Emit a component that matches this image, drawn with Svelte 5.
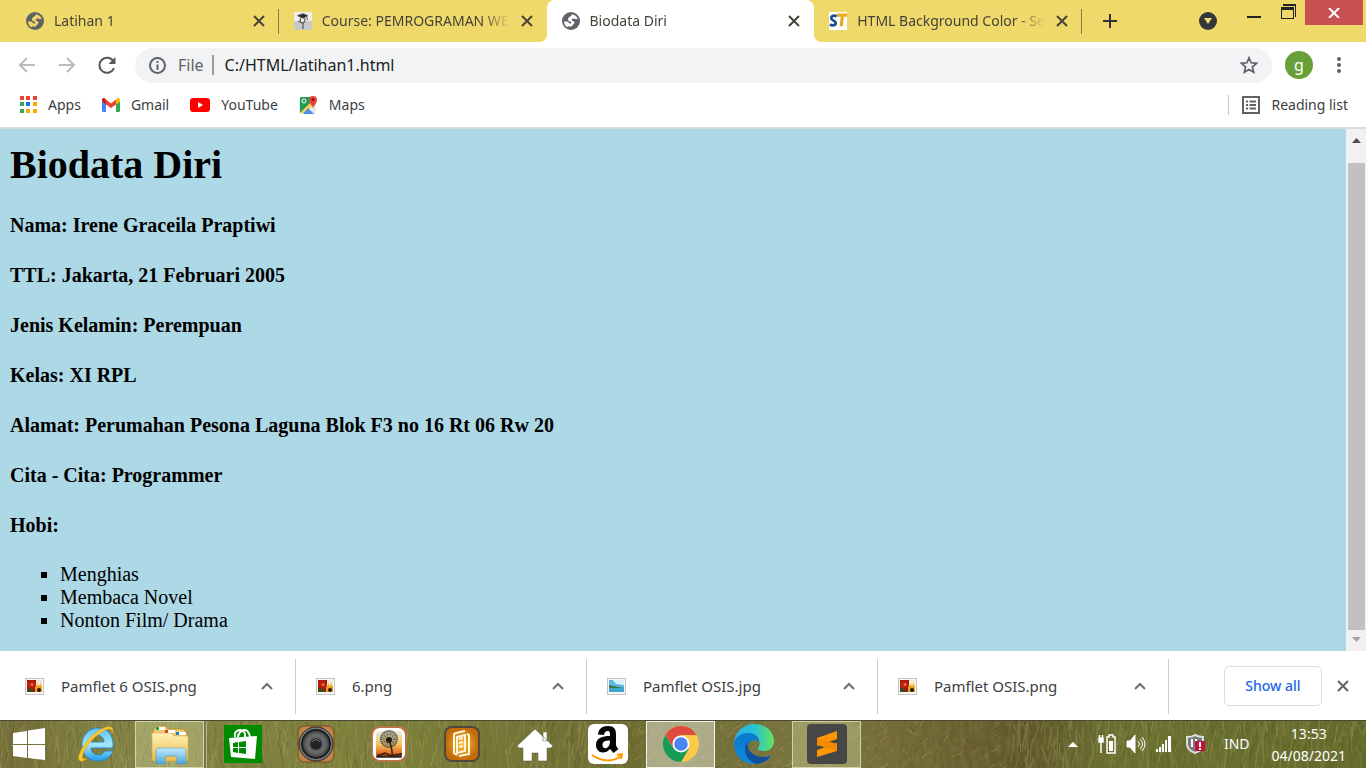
<script>
  const tabs = [
    { title: 'Latihan 1', icon: 'globe' },
    { title: 'Course: PEMROGRAMAN WE', icon: 'course' },
    { title: 'Biodata Diri', icon: 'globe', active: true },
    { title: 'HTML Background Color - Se', icon: 'st' }
  ];
  const biodata = [
    'Nama: Irene Graceila Praptiwi',
    'TTL: Jakarta, 21 Februari 2005',
    'Jenis Kelamin: Perempuan',
    'Kelas: XI RPL',
    'Alamat: Perumahan Pesona Laguna Blok F3 no 16 Rt 06 Rw 20',
    'Cita - Cita: Programmer',
    'Hobi:'
  ];
  const hobbies = ['Menghias', 'Membaca Novel', 'Nonton Film/ Drama'];
  const downloads = [
    { name: 'Pamflet 6 OSIS.png', kind: 'flower' },
    { name: '6.png', kind: 'flower' },
    { name: 'Pamflet OSIS.jpg', kind: 'sea' },
    { name: 'Pamflet OSIS.png', kind: 'flower' }
  ];
  const apps = ['ie', 'files', 'store', 'speaker', 'dandelion', 'notes', 'home', 'amazon', 'chrome', 'edge', 'sublime'];

  // Grass blades of the taskbar wallpaper, from a small seeded generator.
  let seed = 41;
  const rnd = () => (seed = (seed * 16807) % 2147483647) / 2147483647;
  const tones = ['#b5b560', '#9ba548', '#5d5d25', '#c8c07a', '#474d1d', '#88963c', '#a89a58'];
  const blades = Array.from({ length: 1500 }, () => {
    const x = Math.round(rnd() * 1366);
    const y = Math.round(rnd() * 64);
    const lean = Math.round((rnd() - 0.45) * 14);
    const h = Math.round(8 + rnd() * 22);
    const soil = x > 630 && x < 1010;
    return {
      d: soil ? `M${x} ${y}l${lean} -3l3 -3` : `M${x} ${y}q${Math.round(lean / 4)} ${-Math.round(h / 2)} ${lean} ${-h}`,
      c: tones[Math.floor(rnd() * tones.length)]
    };
  });
</script>

{#snippet cross()}
  <svg width="14" height="14" viewBox="0 0 14 14" fill="none" stroke="currentColor" stroke-width="2"><path d="M2 2l10 10M12 2L2 12" /></svg>
{/snippet}

<div class="screen">
  <header>
    <div class="strip">
      <nav class="tabs" aria-label="Tabs">
        {#each tabs as t}
          <div class="tab" class:active={t.active}>
            {#if t.icon === 'globe'}
              <svg class="fav" viewBox="0 0 18 18"><circle cx="9" cy="9" r="9" fill="#5f6368" /><path d="M10 2.200c2 .2 4.500 1.800 5.600 4.300-1 1-2.200.8-3 .3-.8-.6-1.800-.4-2.600.4-.6.8-.2 1.600.8 1.700 1.200.1 1.700.6 1.700 1.600 0 1.200-1 1.400-1.600 2.200-.5.7-.6 1.600-1.600 1.900-1.200.3-1.900-.5-2.900-.2-.9.300-1 .8-1.700.500C3.100 13.600 2 11.700 2 9.500c1.500-.2 3-.2 4 .4 1 .7 1 1.600 2.200 1.600 1 0 1.300-.6 1-1.300-.4-.9-1.900-.7-2.700-1.500C5.600 7.700 6 6.300 7 5.300c.8-.9 1.700-.7 2.200-1.400.4-.6.200-1.100.8-1.700z" fill={t.active ? '#fff' : '#f0d96b'} /></svg>
            {:else if t.icon === 'course'}
              <svg class="fav" viewBox="0 0 20 20"><rect width="20" height="20" rx="1" fill="#eee" /><path d="M0 10h20v10H0z" fill="#c9c9c9" /><path d="M4 4l6-2 5 2-5 3zM14 4l1 5" fill="#292929" stroke="#444" /><path d="M7 7v4l3 2 2-3V7M10 13v6M7 10l-2 1" fill="none" stroke="#666" stroke-width="1.500" /></svg>
            {:else}
              <svg class="fav" viewBox="0 0 20 20"><rect width="20" height="20" fill="#fff" /><path d="M8.500 5C6.500 3.300 2.500 4 2.500 7s5 2.200 5 5.300c0 3-4.500 3-6.500 1.500" fill="none" stroke="#164f92" stroke-width="3" /><path d="M9 3.500h11M15 3.500 13.500 16" fill="none" stroke="#e9aa20" stroke-width="3.500" /></svg>
            {/if}
            <span class="title">{t.title}</span>
            <button class="bare" aria-label="Close tab">{@render cross()}</button>
          </div>
        {/each}
      </nav>
      <button class="bare newtab" aria-label="New tab"><svg width="16" height="16" viewBox="0 0 16 16" stroke="#333" stroke-width="2"><path d="M8 1v14M1 8h14" /></svg></button>
      <button class="bare search" aria-label="Search tabs"><svg width="18" height="18" viewBox="0 0 18 18"><circle cx="9" cy="9" r="9" fill="#35363a" /><path d="M5 6h8l-4 6z" fill="#f0d96b" /></svg></button>
      <div class="window">
        <button class="bare" aria-label="Minimize"><svg width="14" height="20" viewBox="0 0 14 20"><path d="M0 16h14v2H0z" fill="#222" /></svg></button>
        <button class="bare" aria-label="Restore"><svg width="15" height="20" viewBox="0 0 15 20"><path d="M2 4h13v13h-1V6H2zM0 7h13v12H0zM1 10v8h11v-8z" fill="#222" fill-rule="evenodd" /></svg></button>
        <button class="closewin" aria-label="Close window"><svg width="12" height="10" viewBox="0 0 12 10" stroke="#fff" stroke-width="2"><path d="M1 0l10 10M11 0L1 10" /></svg></button>
      </div>
    </div>

    <div class="toolbar">
      <button class="bare" aria-label="Back"><svg width="18" height="16" viewBox="0 0 18 16" fill="none" stroke="#babcbe" stroke-width="2"><path d="M17 8H2M9 1L2 8l7 7" /></svg></button>
      <button class="bare" aria-label="Forward"><svg width="18" height="16" viewBox="0 0 18 16" fill="none" stroke="#babcbe" stroke-width="2"><path d="M1 8h15M9 1l7 7-7 7" /></svg></button>
      <button class="bare" aria-label="Reload"><svg width="18" height="18" viewBox="0 0 18 18"><path d="M15.500 5.500A7.500 7.500 0 1 0 16 12" fill="none" stroke="#55595e" stroke-width="2" /><path d="M17.500 1v7h-7z" fill="#55595e" /></svg></button>
      <div class="omnibox">
        <svg width="17" height="17" viewBox="0 0 17 17"><circle cx="8.500" cy="8.500" r="7.500" fill="none" stroke="#5f6368" stroke-width="2" /><path d="M7.500 4h2v2h-2zM7.500 7.500h2V13h-2z" fill="#5f6368" /></svg>
        <label for="url">File</label><i></i>
        <input id="url" value="C:/HTML/latihan1.html" />
        <button class="bare" aria-label="Bookmark this page"><svg width="18" height="18" viewBox="0 0 18 18"><path d="M9 1.800l2.100 5 5.500.5-4.200 3.600 1.300 5.300L9 13.400l-4.700 2.800 1.300-5.300L1.400 7.300l5.500-.5z" fill="none" stroke="#5f6368" stroke-width="1.700" /></svg></button>
      </div>
      <button class="avatar">g</button>
      <button class="bare" aria-label="Menu"><svg width="4" height="16" viewBox="0 0 4 16" fill="#5f6368"><circle cx="2" cy="2" r="2" /><circle cx="2" cy="8" r="2" /><circle cx="2" cy="14" r="2" /></svg></button>
    </div>

    <nav class="bookmarks" aria-label="Bookmarks">
      <a href="#apps"><svg width="17" height="17" viewBox="0 0 17 17"><path d="M0 0h4v4H0zM6 0h4v4H6zM13 0h4v4h-4z" fill="#ea4335" /><path d="M0 6h4v4H0zM0 13h4v4H0z" fill="#34a853" /><path d="M6 6h4v4H6z" fill="#1a73e8" /><path d="M13 6h4v4h-4zM6 13h4v4H6zM13 13h4v4h-4z" fill="#f9ab00" /></svg>Apps</a>
      <a href="#gmail"><svg width="18" height="14" viewBox="0 0 18 14"><path d="M0 3v9.500Q0 14 1.500 14H4V6z" fill="#4285f4" /><path d="M14 6v8h2.500q1.500 0 1.500-1.500V3z" fill="#34a853" /><path d="M14 2v4.500l4-3V2c0-2-2-2.500-3-1.500z" fill="#fbbc04" /><path d="M4 1.500l5 4 5-4v5L9 10 4 6.500z" fill="#ea4335" /><path d="M0 2v1.500l4 3V1.500L3 .5C2-.5 0 0 0 2z" fill="#c5221f" /></svg>Gmail</a>
      <a href="#youtube"><svg width="20" height="14" viewBox="0 0 20 14"><rect width="20" height="14" rx="3" fill="#f00" /><path d="M8 4v6l5-3z" fill="#fff" /></svg>YouTube</a>
      <a href="#maps"><svg width="19" height="19" viewBox="0 0 19 19"><rect y="2" width="17" height="17" rx="2" fill="#e8eaed" /><path d="M1 18V3q0-1 1-1h10v6z" fill="#1e9e58" /><path d="M1 18L14 5l3 3-5 4-6 6z" fill="#ffd04b" /><path d="M4 19l5-6 6 6z" fill="#4f8ff5" /><circle cx="5" cy="6" r="2" fill="none" stroke="#fff" /><path d="M14 14c0-4-4-5-4-9a4 4 0 0 1 8 0c0 4-4 5-4 9z" fill="#ea4335" /><circle cx="14" cy="4.500" r="1.500" fill="#7c231d" /></svg>Maps</a>
      <a href="#reading" class="reading"><svg width="18" height="18" viewBox="0 0 18 18" fill="none" stroke="#5f6368" stroke-width="2"><path d="M1 1h16v16H1zM4 5.500h2M4 9h2M4 12.500h2M7.500 5.500H14M7.500 9H14M7.500 12.500H14" /></svg>Reading list</a>
    </nav>
  </header>

  <div class="viewport">
    <main>
      <h1>Biodata Diri</h1>
      {#each biodata as line}<h4>{line}</h4>{/each}
      <ul>{#each hobbies as h}<li>{h}</li>{/each}</ul>
    </main>
    <div class="scroll" aria-hidden="true">
      <svg width="9" height="5" viewBox="0 0 9 5"><path d="M0 5L4.500 0 9 5z" fill="#505050" /></svg>
      <div class="thumb"></div>
      <svg width="9" height="5" viewBox="0 0 9 5"><path d="M0 0l4.500 5L9 0z" fill="#a3a3a3" /></svg>
    </div>
  </div>

  <section class="downloads" aria-label="Downloads">
    {#each downloads as d}
      <div class="download">
        <svg width="19" height="17" viewBox="0 0 19 17">
          <rect x=".5" y=".5" width="18" height="16" fill="#f8f8f8" stroke="#c4c4c4" />
          {#if d.kind === 'flower'}
            <path d="M2 2h15v12H2z" fill="#f4e9d8" /><path d="M2 2h9v12H2z" fill="#8e1a10" /><path d="M10 8h7v6h-7z" fill="#e9a21c" />
            <circle cx="6.500" cy="6.500" r="4.500" fill="#b81d10" /><path d="M2 11l3-1 4 4H2z" fill="#3c4a18" /><circle cx="7" cy="6.500" r="1.500" fill="#e8762a" /><circle cx="14" cy="12" r="2" fill="#2b1708" /><path d="M12 8V5l2 3 2-4v4z" fill="#f4b62c" />
          {:else}
            <path d="M2 2h15v12H2z" fill="#5db6e6" /><path d="M6 2h11v5L9 6z" fill="#d8f1fc" /><path d="M2 7l5 1 10 2H2z" fill="#357c4c" /><path d="M2 10h15v4H2z" fill="#3fa6cd" />
          {/if}
        </svg>
        <span>{d.name}</span>
        <button class="bare" aria-label="Options for {d.name}"><svg width="12" height="8" viewBox="0 0 12 8" fill="none" stroke="#6b6f73" stroke-width="2"><path d="M1 7l5-5 5 5" /></svg></button>
      </div>
    {/each}
    <button class="showall">Show all</button>
    <button class="bare hide" aria-label="Close downloads">{@render cross()}</button>
  </section>

  <footer>
    <svg class="grass" viewBox="0 0 1366 48" preserveAspectRatio="xMidYMid slice" aria-hidden="true">
      <defs>
        <linearGradient id="field"><stop offset="0" stop-color="#706936" /><stop offset=".08" stop-color="#858447" /><stop offset=".3" stop-color="#7b8038" /><stop offset=".45" stop-color="#6c6b32" /><stop offset=".6" stop-color="#7c7540" /><stop offset=".7" stop-color="#6b6030" /><stop offset=".75" stop-color="#5f552b" /><stop offset=".82" stop-color="#687030" /><stop offset="1" stop-color="#62692a" /></linearGradient>
        <filter id="grain" x="0" y="0" width="100%" height="100%"><feTurbulence type="fractalNoise" baseFrequency=".2 .06" numOctaves="3" seed="8" /><feColorMatrix values="0 0 0 0 .2  0 0 0 0 .19  0 0 0 0 .06  2.500 0 0 0 -1" /></filter>
      </defs>
      <rect width="1366" height="48" fill="url(#field)" />
      <g fill="none" opacity=".35">{#each blades as b}<path d={b.d} stroke={b.c} />{/each}</g>
      <rect width="1366" height="48" filter="url(#grain)" opacity=".5" />
      <path d="M0 0h1366v1H0z" fill="#4b4a35" />
    </svg>
    <button class="start" aria-label="Start"><svg width="34" height="34" viewBox="0 0 34 34" fill="#fff"><path d="M1 6l14-2v13H1zM16 3.500l17-2.500v16H16zM1 18h14v13L1 29zM16 18h17v15l-17-2z" /></svg></button>
    {#each apps as app}
      <button class="app {app}" aria-label={app}>
        <svg width="40" height="40" viewBox="0 0 40 40">
          {#if app === 'ie'}
            <defs><linearGradient id="ieb" x2="0" y2="1"><stop stop-color="#58c5f5" /><stop offset=".5" stop-color="#a4e5ff" /><stop offset="1" stop-color="#239ee5" /></linearGradient></defs>
            <path d="M36 24H14c0 4 3 7 7 7 3 0 5-1 7-4h8c-2 6-8 10-15 10C11 37 5 30 5 21S11 4 21 4s16 7 15 20zM14 18h13c0-4-3-7-6.500-7S14 14 14 18z" fill="url(#ieb)" stroke="#1c87c7" stroke-width=".8" />
            <path d="M35 10c3-6-1-9-8-6C17 7 6 20 2 31c-2 6 2 8 8 4-7 1-5-4-1-11C15 14 27 5 32 5c3 0 3 2 3 5z" fill="#fdc82f" stroke="#d79a14" stroke-width=".5" />
          {:else if app === 'files'}
            <defs><linearGradient id="folder" x2="0" y2="1"><stop stop-color="#fff2b4" /><stop offset="1" stop-color="#e9bb4e" /></linearGradient><linearGradient id="stand" x2="0" y2="1"><stop stop-color="#c5ecfb" /><stop offset="1" stop-color="#4aa7df" /></linearGradient></defs>
            <path d="M3 6l3-4h10l2 3h16l3 5v9H2z" fill="#ebca70" stroke="#b98e35" /><path d="M6 3h9v3H6zM15 6h10v3H15zM26 8h10v3H26z" fill="#fff" /><path d="M6 3h3v3H6z" fill="#1da350" /><path d="M15 6h3v3h-3z" fill="#db3a25" /><path d="M26 8h3v3h-3z" fill="#1682cf" />
            <path d="M2 9h19l3 3h14v23q0 2-2 2H4q-2 0-2-2z" fill="url(#folder)" stroke="#d1a747" stroke-width=".5" /><path d="M6 40V27q0-3 3-3h24q3 0 3 3v13h-9v-6q0-2-2-2h-8q-2 0-2 2v6z" fill="url(#stand)" stroke="#378ebf" stroke-width=".5" />
          {:else if app === 'store'}
            <path d="M1 1h38v38H1z" fill="#008a00" /><path d="M14 13c-2-7 8-10 10-3v3M17 13c0-6 10-12 12 0" fill="none" stroke="#fff" stroke-width="2" transform="translate(-2)" /><path d="M6 14l28-2-2 23-24-2z" fill="#fff" /><path d="M10 19l5-1v5h-5zM16 18l7-1v6h-7zM10 24h5v5l-5-1zM16 24h7v6l-7-1z" fill="#008a00" />
          {:else if app === 'speaker'}
            <defs><radialGradient id="cone"><stop stop-color="#3a3d40" /><stop offset=".6" stop-color="#6c6e70" /><stop offset="1" stop-color="#3d3f41" /></radialGradient></defs>
            <rect x="2" y="2" width="36" height="36" rx="7" fill="#c08549" stroke="#7a4b20" /><circle cx="20" cy="20" r="17" fill="#77797a" stroke="#292929" /><circle cx="20" cy="20" r="14" fill="url(#cone)" stroke="#1e1f20" stroke-width="2" /><circle cx="20" cy="20" r="6" fill="#212325" stroke="#4b4d4f" /><path d="M16 18q4-5 8 0" fill="none" stroke="#777" />
          {:else if app === 'dandelion'}
            <defs><linearGradient id="dusk" x2="0" y2="1"><stop stop-color="#eceae0" /><stop offset=".5" stop-color="#f3c460" /><stop offset=".85" stop-color="#e66e25" /><stop offset="1" stop-color="#432010" /></linearGradient></defs>
            <rect x="2" y="2" width="36" height="36" rx="8" fill="#b87346" /><rect x="4" y="4" width="32" height="32" rx="7" fill="#fff" /><rect x="7" y="7" width="26" height="26" rx="4" fill="url(#dusk)" /><circle cx="20" cy="15" r="9" fill="#69675c" opacity=".5" /><circle cx="20" cy="15" r="8" fill="none" stroke="#55534b" stroke-width="2" stroke-dasharray="1 1" /><circle cx="20" cy="15" r="5" fill="none" stroke="#65635b" stroke-width="2" stroke-dasharray="1 2" /><circle cx="20" cy="16" r="3" fill="#201a12" /><path d="M20 16q4 10 3 17M8 32l8-3 6 3 10-2v3H8z" fill="none" stroke="#332014" stroke-width="1.500" />
          {:else if app === 'notes'}
            <defs><radialGradient id="amber"><stop stop-color="#ffc33e" /><stop offset="1" stop-color="#c46a0a" /></radialGradient></defs>
            <rect x="2" y="2" width="36" height="36" rx="8" fill="#51473e" /><rect x="4" y="4" width="32" height="32" rx="6" fill="url(#amber)" /><path d="M15 13l8-2v16l-8 2zM14 9l-2 1v19l3 2M25 10l2 1v19l-10 2M14 9l9-2M17 15l4-1M17 19l4-1M17 23l4-1" fill="none" stroke="#fff6dc" stroke-width="2" />
          {:else if app === 'home'}
            <path d="M20 5l18 17-2 2h-4v13h-9v-8h-6v8H8V24H4l-2-2zM28 8h4v9h-4z" fill="#fff" stroke="#55553b" stroke-width=".5" />
          {:else if app === 'amazon'}
            <rect width="40" height="40" rx="6" fill="#fff" /><path d="M10 10.500C10.500 5 14 2 20 2c6 0 8 3 8 8v9.500c0 3 1 4 2.500 5.500l-5 4-3.500-4c-5 6-14 4-14-4 0-7 6-9 14-9 0-3.500 0-5-2.500-5-2 0-3 1.500-3.500 4zM22 16.500c-5 0-7.500 1-7.500 4.500 0 5 7.500 5 7.500-4.500z" fill="#050505" /><path d="M4 31c10 7 21 7 29 1M29 31l5-1-1 5" fill="none" stroke="#ff9900" stroke-width="2" />
          {:else if app === 'chrome'}
            <circle cx="20" cy="20" r="18" fill="#fbc94c" /><path d="M20 11h15.600A18 18 0 0 0 4.400 11l8 13z" fill="#df4b3f" /><path d="M4.400 11A18 18 0 0 0 20 38l8-13.500L12.200 24z" fill="#159b58" /><circle cx="20" cy="20" r="8.500" fill="#fff" /><circle cx="20" cy="20" r="6.800" fill="#4787f3" />
          {:else if app === 'edge'}
            <defs><linearGradient id="wave"><stop stop-color="#32a8ea" /><stop offset=".5" stop-color="#27c2d8" /><stop offset="1" stop-color="#65e35a" /></linearGradient><linearGradient id="deep" x2="0" y2="1"><stop stop-color="#0b79cc" /><stop offset="1" stop-color="#0b8dde" /></linearGradient></defs>
            <path d="M0 20C0 9 9 0 20 0c12 0 20 8 20 17 0 7-5 10-10 10-4 0-7-1-6-3 5-8-2-14-10-14C6 10 0 15 0 20z" fill="url(#wave)" /><path d="M0 20C1 13 7 9 14 9c7 0 12 4 11 10-2-4-9-4-11 2-2 9 7 14 14 13 4-.500 6-3 9-2-4 6-10 8-17 8C9 40 0 31 0 20z" fill="url(#deep)" /><path d="M13 18c-5 7-1 18 9 22 6 0 11-3 15-8-9 3-24 0-24-14z" fill="#124f9c" />
          {:else}
            <rect width="40" height="40" rx="4" fill="#464646" /><path d="M10 14l20-7v8l-20 7zM10 26l20-7v8l-20 6z" fill="#ff9800" /><path d="M10 14l20 6v7l-20-6z" fill="#f58a00" />
          {/if}
        </svg>
      </button>
    {/each}
    <div class="tray">
      <svg width="10" height="6" viewBox="0 0 10 6"><path d="M0 6l5-5 5 5z" fill="#fff" /></svg>
      <svg width="18" height="20" viewBox="0 0 18 20"><path d="M1 4v4h4V4zM1.500 1v4M4.500 1v4M3 8v11" stroke="#fff" stroke-width="1.500" fill="#fff" /><path d="M9 3h2V1h4v2h2v16H9z" fill="none" stroke="#fff" stroke-width="1.500" /><path d="M11 7h4v10h-4z" fill="#fff" /></svg>
      <svg width="20" height="20" viewBox="0 0 20 20" fill="none" stroke="#fff"><path d="M1 7h3l5-6v18l-5-6H1z" fill="#fff" /><path d="M12 7q3 3 0 6M14 5q5 5 0 10M16 3q6 7 0 14" /></svg>
      <svg class="signal" width="16" height="18" viewBox="0 0 16 18" fill="#fff"><path d="M0 14h2v3H0zM3 12h2v5H3zM6 9h2v8H6zM9 5h2v12H9zM12 1h3v16h-3z" /></svg>
      <svg width="20" height="20" viewBox="0 0 20 20"><path d="M1 3q5 0 8-2 4 2 8 2v7q0 6-8 9-8-3-8-9z" fill="#777b7d" stroke="#ddd" stroke-width="2" /><path d="M6 5v8M10 5v7" stroke="#fff" stroke-width="2" /><rect x="9" y="7" width="10" height="10" fill="#c1123c" /><path d="M13 8h2v5h-2zM13 14h2v2h-2z" fill="#fff" /></svg>
      <span>IND</span>
      <time datetime="2021-08-04T13:53">13:53<br />04/08/2021</time>
    </div>
  </footer>
</div>

<style>
  :global(body) { margin: 0; }
  .screen { display: flex; flex-direction: column; min-height: 100vh; font: 14px/20px "Noto Sans", "Open Sans", sans-serif; color: #3c4043; background: #fff; }
  svg { display: block; flex: none; }
  button { font: inherit; color: inherit; padding: 0; border: 0; cursor: default; }
  .bare { background: none; }
  .strip { display: flex; height: 42px; background: #f0d96b; padding-left: 11px; align-items: center; }
  .tabs { display: flex; align-self: stretch; flex: 0 1 1071px; min-width: 0; }
  .tab { position: relative; flex: 1 1 0; min-width: 0; display: flex; align-items: center; gap: 10px; padding: 0 13px 0 15px; color: #45433a; }
  .tab:first-child::after, .tab:last-child::after { content: ""; position: absolute; right: 0; top: 9px; width: 1px; height: 25px; background: #857b49; }
  .tab.active { background: #fff; border-radius: 8px 8px 0 0; }
  .tab.active::before, .tab.active::after { content: ""; position: absolute; bottom: 0; width: 8px; height: 8px; }
  .tab.active::before { right: 100%; background: radial-gradient(circle at 0 0, #f0d96b 8px, #fff 8px); }
  .tab.active::after { left: 100%; background: radial-gradient(circle at 100% 0, #f0d96b 8px, #fff 8px); }
  .fav { width: 18px; height: 18px; }
  .title { flex: 1; min-width: 0; overflow: hidden; white-space: nowrap; mask-image: linear-gradient(90deg, #000 calc(100% - 28px), transparent); }
  .newtab { margin-left: 20px; }
  .search { margin-left: auto; }
  .window { display: flex; align-self: flex-start; align-items: flex-start; margin-left: 30px; gap: 20px; padding-right: 3px; }
  .closewin { background: #c75050; width: 58px; height: 25px; display: grid; place-items: center; margin-left: -11px; }
  .toolbar { display: flex; align-items: center; height: 46px; padding: 0 25px 0 18px; gap: 22px; }
  .omnibox { display: flex; align-items: center; flex: 1; height: 35px; border-radius: 18px; background: #f1f3f4; padding: 0 14px; margin: 0 -9px 0 -3px; font-size: 16px; }
  .omnibox label { margin-left: 12px; color: #5f6368; }
  .omnibox i { width: 2px; height: 20px; background: #9a9da0; margin: 0 11px 0 8px; }
  .omnibox input { flex: 1; min-width: 0; border: 0; padding: 0; background: none; font: inherit; color: #202124; }
  .avatar { width: 28px; height: 28px; border-radius: 50%; background: #689f38; color: #fff; font-size: 16px; line-height: 24px; margin-right: 2px; }
  .bookmarks { display: flex; align-items: center; height: 33px; padding: 0 18px 6px 20px; gap: 21px; border-bottom: 2px solid #dadce0; }
  .bookmarks a { display: flex; align-items: center; gap: 11px; color: inherit; text-decoration: none; }
  .bookmarks .reading { margin-left: auto; padding-left: 13px; border-left: 1px solid #c6c8ca; }
  .viewport { display: flex; flex: 1; background: #add8e6; }
  main { flex: 1; padding: 13px 10px 0; color: #000; font: 20px/23px "Liberation Serif", "Times New Roman", serif; }
  h1 { font-size: 40px; line-height: 46px; margin: 0 0 26px; }
  h4 { font-size: 20px; margin: 0 0 27px; }
  ul { margin: -1px 0 0; padding-left: 50px; list-style: square; }
  .scroll { width: 20px; background: #f1f1f1; display: flex; flex-direction: column; align-items: center; gap: 7px; padding: 9px 0; box-sizing: border-box; }
  .scroll svg:first-child { margin-bottom: 13px; }
  .thumb { flex: 1; width: 17px; background: #c1c1c1; }
  .downloads { display: flex; align-items: center; height: 68px; padding: 1px 16px 0 5px; }
  .download { display: flex; align-items: center; flex: 0 1 291px; box-sizing: border-box; height: 55px; padding: 0 22px 0 20px; border-right: 1px solid #ccc; min-width: 0; font-size: 15px; }
  .download span { flex: 1; margin-left: 17px; white-space: nowrap; overflow: hidden; }
  .showall { margin-left: auto; width: 98px; height: 40px; border: 1px solid #dadce0; border-radius: 5px; background: #fff; color: #1a67e8; font-weight: 500; }
  .hide { margin-left: 14px; color: #5f6368; }
  footer { position: relative; display: flex; align-items: center; height: 48px; gap: 4px; color: #fff; }
  .grass { position: absolute; inset: 0; width: 100%; height: 100%; }
  footer button, .tray { position: relative; }
  .start { width: 58px; background: none; display: grid; place-items: center; }
  .app { width: 69px; height: 47px; box-sizing: border-box; background: none; display: grid; place-items: center; border: 1px solid transparent; }
  .files, .sublime { background: rgba(220, 225, 170, .35); border-color: rgba(245, 245, 220, .6); }
  .files { box-shadow: 2px 0 #77754a, 3px 0 #b5b48a; }
  .chrome { background: rgba(220, 220, 200, .55); border-color: #f4f4e9; }
  .tray { display: flex; align-items: center; gap: 10px; margin-left: auto; padding-right: 20px; }
  .tray svg:first-child { margin-right: 10px; }
  .tray .signal { margin-right: 4px; }
  .tray span { margin: 0 12px 0 8px; }
  time { text-align: center; line-height: 22px; padding-top: 2px; }
</style>
